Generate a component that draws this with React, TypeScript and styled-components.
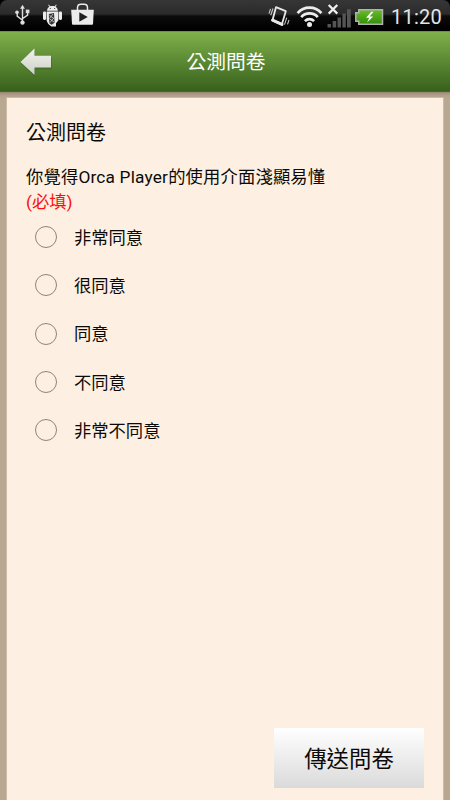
import React, { useState } from "react";
import styled, { createGlobalStyle } from "styled-components";

const GlobalStyle = createGlobalStyle`
  *, *::before, *::after { box-sizing: border-box; }
  html, body { margin: 0; padding: 0; background: #b9a891; }
  body { font-family: Roboto, "Noto Sans CJK TC", sans-serif; color: #0c0a08; }
`;

const Screen = styled.div`
  width: 450px;
  height: 800px;
  display: flex;
  flex-direction: column;
  overflow: hidden;
  background: #000;
`;

const StatusBar = styled.div`
  flex: none;
  height: 31px;
  display: flex;
  justify-content: space-between;
  border-radius: 7px 7px 0 0;
  background: linear-gradient(#363636 0, #2b2b2b 14px, #0c0c0c 16px, #000 29px);
`;

const StatusIcons = styled.svg`
  display: block;
  flex: none;
`;

const StatusRight = styled.div`
  display: flex;
`;

const Clock = styled.span`
  width: 60px;
  padding-left: 1px;
  font-size: 20px;
  line-height: 34px;
  letter-spacing: 0.25px;
  color: #e4e4e4;
  white-space: nowrap;
`;

const Header = styled.header`
  flex: none;
  height: 61px;
  display: grid;
  grid-template-columns: 72px 1fr 72px;
  align-items: center;
  border-top: 1px solid #68963c;
  border-bottom: 1px solid #4a6038;
  background: linear-gradient(#7fb04b, #37611c);
`;

const BackButton = styled.button`
  height: 58px;
  padding: 0;
  border: 0;
  background: none;
  svg { display: block; }
`;

const HeaderTitle = styled.h1`
  margin: 0;
  padding: 2px 0 0 2px;
  text-align: center;
  font-size: 19.8px;
  line-height: 28px;
  font-weight: 400;
  color: #fff;
`;

const Body = styled.main`
  flex: 1;
  min-height: 0;
  display: flex;
  padding: 6px 7px 0;
  background: linear-gradient(#978674 0, #b19f8a 3px, #b9a891 7px);
`;

const Card = styled.form`
  flex: 1;
  display: flex;
  flex-direction: column;
  padding: 19px 19px 12px 19px;
  background: #fdf0e2;
  box-shadow: 0 0 0 1px #cdbba6;
`;

const Heading = styled.h2`
  margin: 0;
  font-size: 20px;
  line-height: 32px;
  font-weight: 400;
`;

const Question = styled.p`
  margin: 16px 0 0;
  font-size: 17.3px;
  line-height: 24px;
  letter-spacing: 0.18px;
  white-space: nowrap;
`;

const Required = styled.span`
  display: block;
  padding-top: 1px;
  letter-spacing: 0;
  color: #fa0f0c;
`;

const Options = styled.div`
  display: grid;
  grid-auto-rows: 48.3px;
  margin-top: -1px;
  padding-left: 9px;
`;

const Option = styled.label`
  display: flex;
  align-items: center;
  font-size: 17.3px;
  line-height: 26px;
`;

const OptionText = styled.span`
  padding-top: 1px;
`;

const Radio = styled.input`
  appearance: none;
  flex: none;
  width: 22px;
  height: 22px;
  margin: 0 17px 0 0;
  border: 1px solid #8d857d;
  border-radius: 50%;
  &:checked { background: radial-gradient(#5d9231 0 5px, transparent 6px); }
`;

const Submit = styled.button`
  width: 150px;
  height: 60px;
  margin: auto 0 0;
  align-self: flex-end;
  padding: 2px 0 0;
  border: 0;
  font: 400 22.4px/32px Roboto, "Noto Sans CJK TC", sans-serif;
  color: #0c0a08;
  background: linear-gradient(#fff, #dadada);
`;

const NotificationIcons = () => (
  <StatusIcons width="110" height="31" viewBox="0 0 110 31" fill="none">
    <g stroke="#dedede" strokeWidth="1.4">
      <path d="M22.5 8v14M22.5 20.2l-5.3-4.1v-3M22.5 18.6l5.1-3.4v-2.7" />
    </g>
    <g fill="#dedede">
      <path d="M22.5 4.8l2.4 4h-4.8z" />
      <circle cx="22.5" cy="22.6" r="2.2" />
      <circle cx="17" cy="12.2" r="1.8" />
      <path d="M25.8 9.6h3.6v3.5h-3.6z" />
    </g>
    <g fill="#ececec">
      <path d="M47 10.8c.2-2.2 1-3.4 2.3-4.1L48.2 5l.7-.4 1.2 1.7c1.5-.5 3.3-.5 4.7 0L56 4.6l.7.4-1.1 1.7c1.3.7 2.1 1.9 2.3 4.1z" />
      <path d="M46.7 11.4h11.6v9l-2.3 2.8v3.3h-4.7l-3-2.6-1.6-3z" />
      <rect x="43" y="11.6" width="3.2" height="8.3" rx="1.3" />
      <rect x="58.8" y="11.6" width="3.2" height="8.3" rx="1.3" />
    </g>
    <g fill="#363636">
      <circle cx="50.3" cy="8.5" r=".6" />
      <circle cx="54.7" cy="8.5" r=".6" />
      <path d="M48.8 14l5.2-1 .6 9.8-3 1.9-2.3-1.5z" />
    </g>
    <path d="M49.5 15.5l4.5 3M53 14l-3.5 4.5M49.8 19l4.2 3M53.8 18l-3.8 4.5" stroke="#cfcfcf" strokeWidth=".8" />
    <path d="M77.5 10V7.7c0-2.2 1.4-3.5 3.4-3.5h3.2c2 0 3.4 1.3 3.4 3.5V10" stroke="#ececec" strokeWidth="1.5" />
    <path d="M71.2 9.8h22.6L93 24c-.1.6-.4.8-.9.8H72.9c-.5 0-.8-.2-.9-.8z" fill="#ececec" />
    <path d="M79.3 12.2l8.4 4.8-8.4 4.8z" fill="#202020" />
  </StatusIcons>
);

const SystemIcons = () => (
  <StatusIcons width="130" height="31" viewBox="260 0 130 31" fill="none">
    <path d="M276 7.2l9.8 4-4 13.4-9.4-4.2z" stroke="#e8e8e8" strokeWidth="1.8" strokeLinejoin="round" />
    <path d="M272.6 20.2l9.4 4.2" stroke="#e8e8e8" strokeWidth="3" strokeLinecap="round" />
    <path d="M273 8.5l-2.3 6.7M270.5 8.8l-1.5 4.8M286.8 17.6l-2.3 7M289 20l-1.5 4.4" stroke="#c8c8c8" strokeWidth="1.1" />
    <g stroke="#ededed" strokeWidth="2.7">
      <path d="M297.6 13.1c6.4-7.2 17.4-7.2 23.8 0" />
      <path d="M301.2 17.2c4.5-5 12.1-5 16.6 0" />
      <path d="M304.9 21.1c2.6-2.7 6.6-2.7 9.2 0" />
    </g>
    <circle cx="309.5" cy="24.4" r="2.5" fill="#ededed" />
    <g fill="#555">
      <path d="M327.5 24h3.5v3.5h-3.5zM332.6 21h3.6v6.5h-3.6zM337.5 17.4h3.5v10.1h-3.5zM342.4 13.5h3.4v14h-3.4zM347 9.2h3.8v18.3H347z" />
    </g>
    <path d="M328.7 5l8.6 8.6M337.3 5l-8.6 8.6" stroke="#f1f1f1" strokeWidth="2.2" />
    <defs>
      <linearGradient id="battery" x1="0" y1="0" x2="0" y2="1">
        <stop stopColor="#69bd2b" />
        <stop offset="1" stopColor="#348e08" />
      </linearGradient>
    </defs>
    <path d="M358.8 9.8h23.7v14.4h-23.7v-3h-3v-8.4h3z" fill="url(#battery)" stroke="#b2b2b2" strokeWidth="1.5" />
    <path d="M371.2 11.7l-5.1 6.1h3.2l-2.3 4.8 6.2-6.2h-3.6l4-4.7z" fill="#fff" />
  </StatusIcons>
);

const BackArrow = () => (
  <svg width="72" height="58" viewBox="0 0 72 58">
    <defs>
      <linearGradient id="arrow" x1="0" y1="0" x2="0" y2="1">
        <stop stopColor="#f2f2ee" />
        <stop offset="1" stopColor="#cbd0c5" />
      </linearGradient>
    </defs>
    <path d="M21 30.5L35 17v7.4h17v12.2H35V44z" fill="#355e1c" opacity=".45" />
    <path d="M20.5 29L34.5 15.6v7.2H51v11.6H34.5V42z" fill="url(#arrow)" />
  </svg>
);

const choices = ["非常同意", "很同意", "同意", "不同意", "非常不同意"];

export default function App() {
  const [answer, setAnswer] = useState("");
  return (
    <>
      <GlobalStyle />
      <Screen>
        <StatusBar>
          <NotificationIcons />
          <StatusRight>
            <SystemIcons />
            <Clock>11:20</Clock>
          </StatusRight>
        </StatusBar>
        <Header>
          <BackButton type="button" aria-label="返回"><BackArrow /></BackButton>
          <HeaderTitle>公測問卷</HeaderTitle>
        </Header>
        <Body>
          <Card onSubmit={(event) => event.preventDefault()}>
            <Heading>公測問卷</Heading>
            <Question>
              你覺得Orca Player的使用介面淺顯易懂
              <Required>(必填)</Required>
            </Question>
            <Options role="radiogroup">
              {choices.map((choice) => (
                <Option key={choice}>
                  <Radio type="radio" name="answer" checked={answer === choice} onChange={() => setAnswer(choice)} />
                  <OptionText>{choice}</OptionText>
                </Option>
              ))}
            </Options>
            <Submit type="submit">傳送問卷</Submit>
          </Card>
        </Body>
      </Screen>
    </>
  );
}
